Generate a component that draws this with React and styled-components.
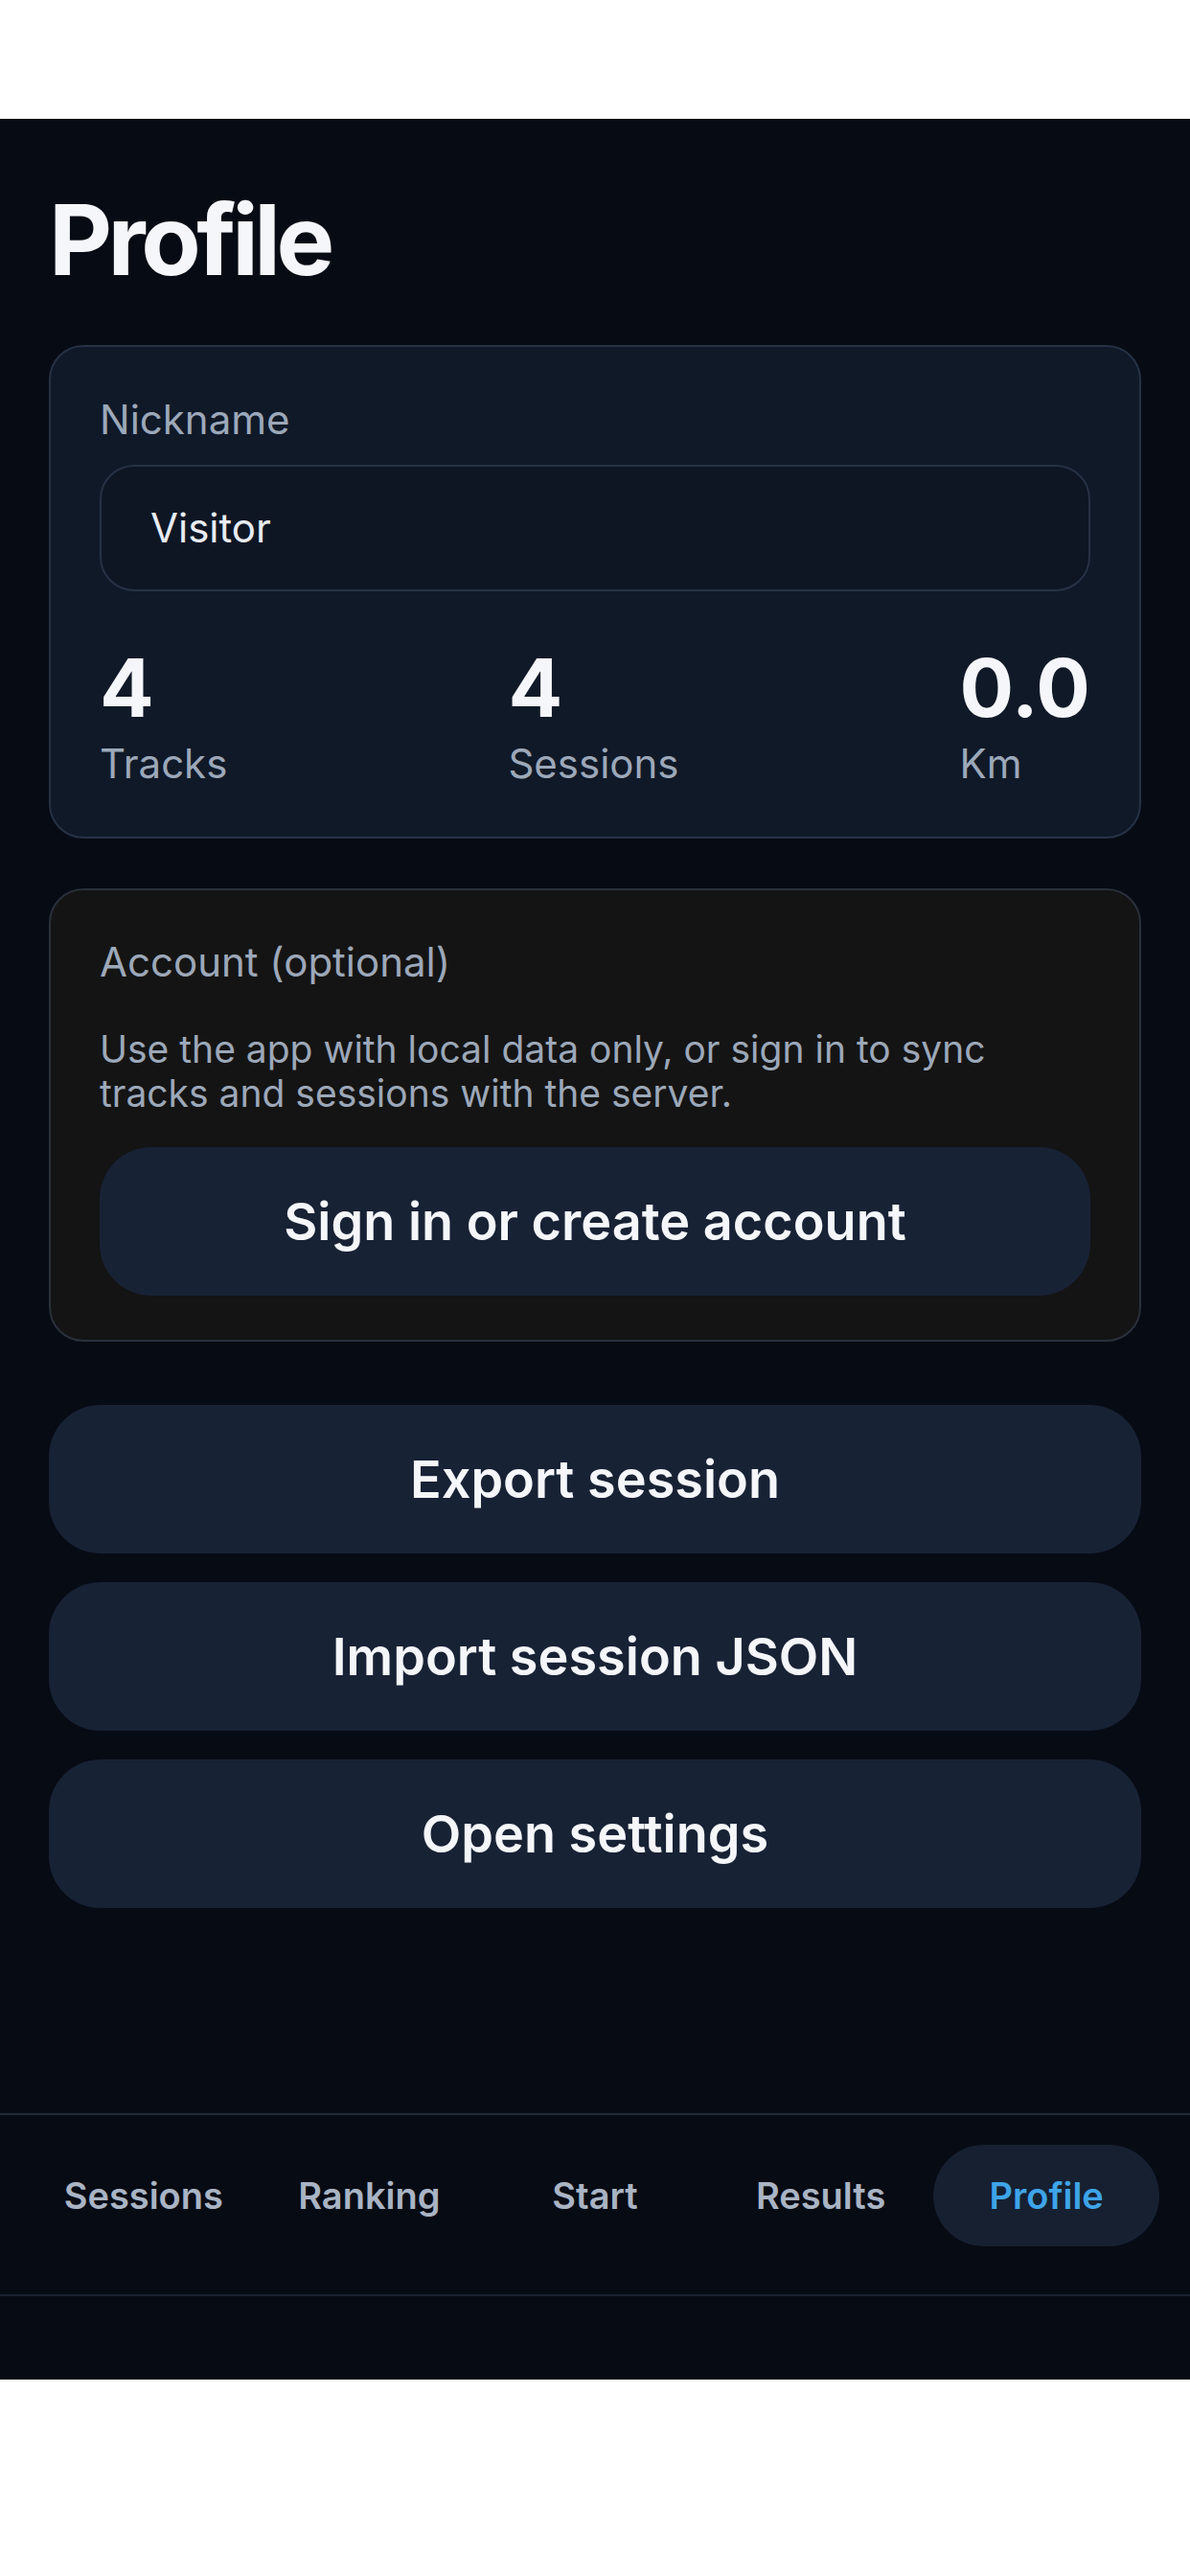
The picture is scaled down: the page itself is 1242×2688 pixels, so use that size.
import React from "react";
import styled, { createGlobalStyle } from "styled-components";

const Global = createGlobalStyle`
  html, body { margin: 0; padding: 0; background: #ffffff; }
  body { font-family: Inter, "Noto Sans", "Liberation Sans", sans-serif; -webkit-font-smoothing: antialiased; }
  * { box-sizing: border-box; }
`;

const Page = styled.div`
  padding-top: 124px;
  background: #ffffff;
`;

const Screen = styled.div`
  height: 2359px;
  background: #070b14;
  display: flex;
  flex-direction: column;
`;

const Content = styled.main`
  flex: 1;
  padding: 65px 51px 0;
  display: flex;
  flex-direction: column;
`;

const Title = styled.h1`
  margin: 0 0 49px;
  font-size: 102px;
  line-height: 1.2;
  font-weight: 700;
  letter-spacing: -4.5px;
  color: #f4f6f9;
`;

const Card = styled.section`
  border-radius: 36px;
  border: 2px solid ${(p) => (p.$neutral ? "#2a313c" : "#263245")};
  background: ${(p) => (p.$neutral ? "#141414" : "#101928")};
  padding: ${(p) => (p.$neutral ? "50px 51px 46px" : "51px")};
  margin-top: ${(p) => p.$mt || 0}px;
  display: flex;
  flex-direction: column;
`;

const Label = styled.div`
  font-size: 42px;
  line-height: 1.2;
  color: #9ca8b9;
`;

const Input = styled.div`
  margin-top: 21px;
  height: 132px;
  border-radius: 36px;
  border: 2px solid #263245;
  background: #0e1624;
  display: flex;
  align-items: center;
  padding-left: 51px;
  font-size: 42px;
  color: #e8ecf1;
`;

const Stats = styled.div`
  margin-top: 51px;
  display: flex;
  justify-content: space-between;
`;

const Stat = styled.div`
  display: flex;
  flex-direction: column;
`;

const StatValue = styled.div`
  font-size: 84px;
  line-height: 1.2;
  font-weight: 700;
  color: #f4f6f9;
  margin-bottom: 3px;
`;

const Desc = styled.p`
  margin: 43px 0 0;
  max-width: 990px;
  font-size: 39px;
  line-height: 46px;
  color: #9ca8b9;
`;

const Button = styled.button`
  width: 100%;
  height: 155px;
  border: none;
  border-radius: 54px;
  background: #182235;
  color: #f4f6f9;
  font-family: inherit;
  font-size: 54px;
  font-weight: 600;
  margin-top: ${(p) => p.$mt || 0}px;
  cursor: pointer;
`;

const Actions = styled.div`
  margin-top: 66px;
  display: flex;
  flex-direction: column;
  gap: 30px;
`;

const Nav = styled.nav`
  border-top: 2px solid #222b39;
  padding: 31px 32px 50px;
  display: grid;
  grid-template-columns: repeat(5, 1fr);
`;

const NavItem = styled.div`
  height: 106px;
  border-radius: 999px;
  display: flex;
  align-items: center;
  justify-content: center;
  font-size: 38px;
  font-weight: 600;
  color: ${(p) => (p.$active ? "#3ea4e8" : "#a9b4c4")};
  background: ${(p) => (p.$active ? "#162031" : "transparent")};
`;

const SafeArea = styled.div`
  height: 89px;
  border-top: 2px solid #1a2230;
`;

const stats = [
  { value: "4", label: "Tracks" },
  { value: "4", label: "Sessions" },
  { value: "0.0", label: "Km" },
];

const tabs = ["Sessions", "Ranking", "Start", "Results", "Profile"];

export default function App() {
  return (
    <Page>
      <Global />
      <Screen>
        <Content>
          <Title>Profile</Title>
          <Card>
            <Label>Nickname</Label>
            <Input>Visitor</Input>
            <Stats>
              {stats.map((s) => (
                <Stat key={s.label}>
                  <StatValue>{s.value}</StatValue>
                  <Label>{s.label}</Label>
                </Stat>
              ))}
            </Stats>
          </Card>
          <Card $neutral $mt={52}>
            <Label>Account (optional)</Label>
            <Desc>
              Use the app with local data only, or sign in to sync tracks and
              sessions with the server.
            </Desc>
            <Button $mt={33}>Sign in or create account</Button>
          </Card>
          <Actions>
            <Button>Export session</Button>
            <Button>Import session JSON</Button>
            <Button>Open settings</Button>
          </Actions>
        </Content>
        <Nav>
          {tabs.map((t) => (
            <NavItem key={t} $active={t === "Profile"}>
              {t}
            </NavItem>
          ))}
        </Nav>
        <SafeArea />
      </Screen>
    </Page>
  );
}
